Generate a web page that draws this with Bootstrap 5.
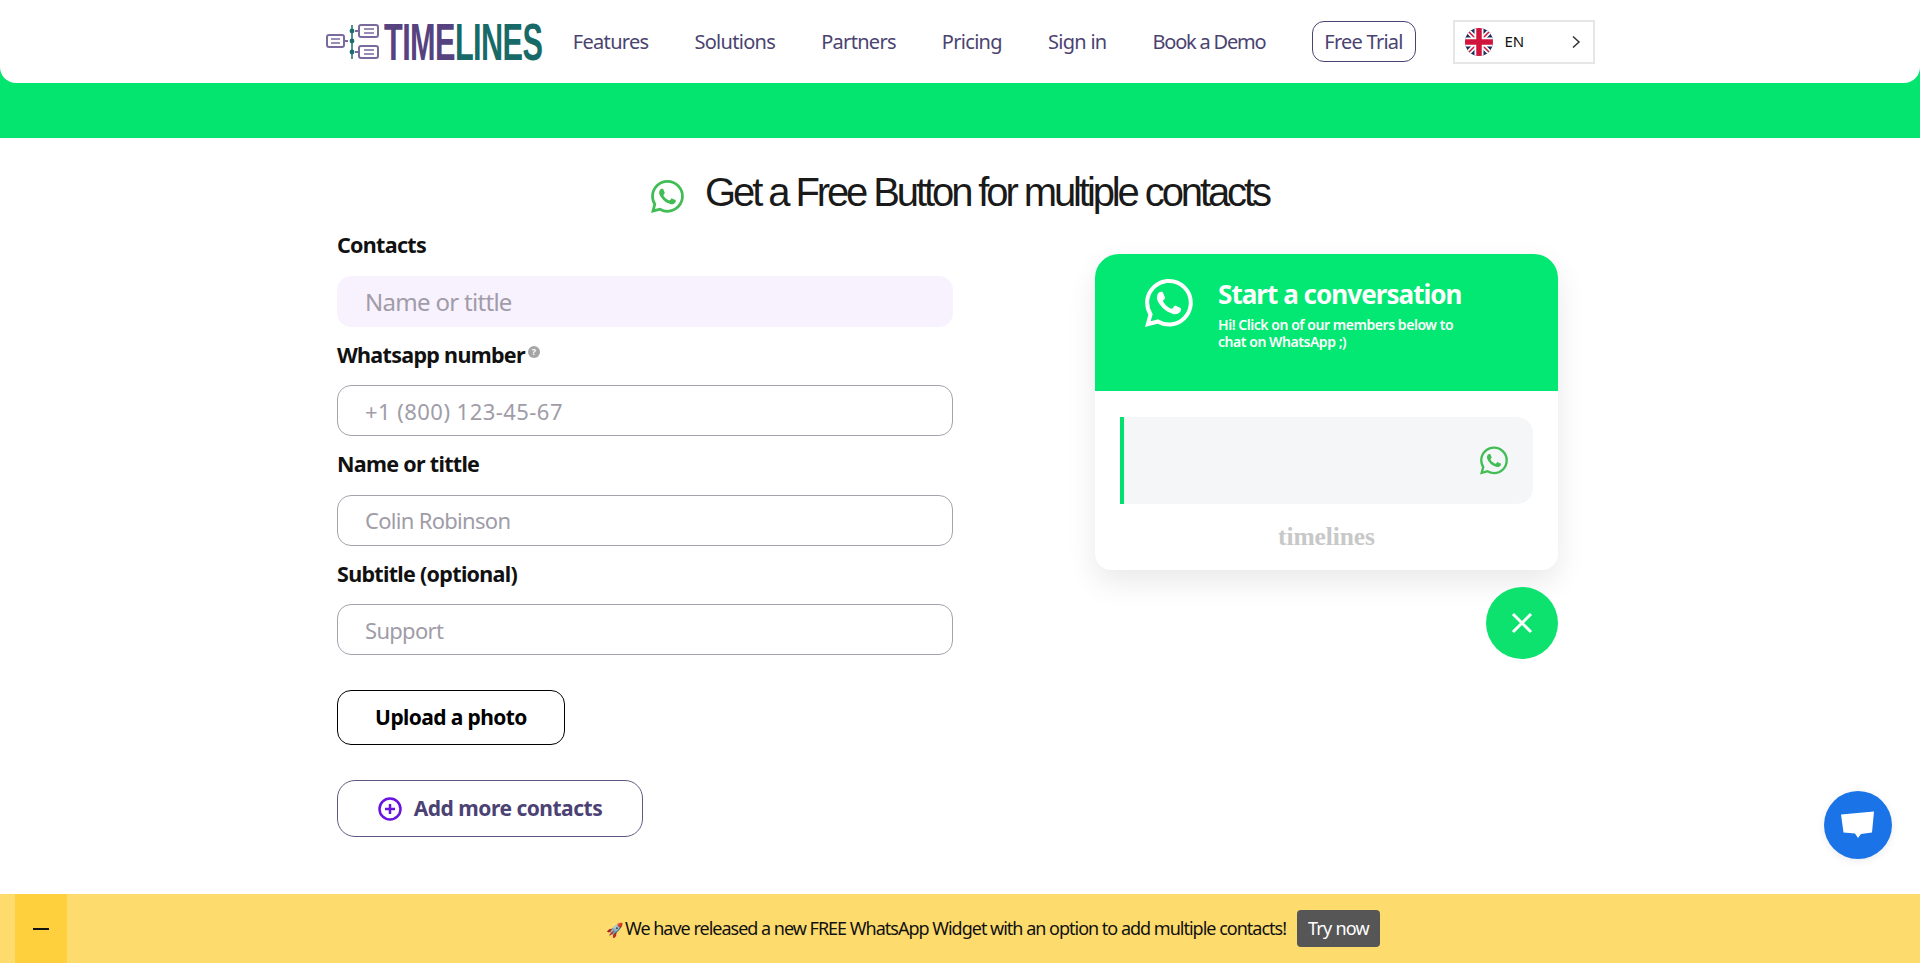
<!DOCTYPE html>
<html lang="en">
<head>
    <meta charset="UTF-8" />
    <meta name="viewport" content="width=device-width, initial-scale=1.0"/>
    <link href="https://cdn.jsdelivr.net/npm/bootstrap@5.3.0/dist/css/bootstrap.min.css" rel="stylesheet"/>
    <title>Timelines - Free WhatsApp Button</title>
    <style>
        body { font-family: "Noto Sans", "Open Sans", sans-serif; color: #111; overflow: hidden; height: 963px; }
        .top-band { background: linear-gradient(#02dc6b, #03e56f 40%); height: 138px; }
        .top-nav { background: #fff; height: 83px; border-radius: 0 0 16px 16px; }
        .nav-inner { width: 1269px; height: 83px; }
        .logo-box { width: 218px; margin-right: 30px; }
        .logo-word { font-family: "Liberation Sans", sans-serif; font-weight: 700; font-size: 52px; line-height: 1; letter-spacing: -1px; width: 159px; white-space: nowrap; display: inline-block; transform: scaleX(.59); transform-origin: left center; margin-left: 4px; }
        .logo-purple { color: #55427f; }
        .logo-teal { color: #186a68; }
        .menu-link { color: #4a4370; font-size: 20px; letter-spacing: -.7px; text-decoration: none; white-space: nowrap; }
        .menu-link.menu-tight { letter-spacing: -1.2px; }
        .menu-gap { gap: 46px; }
        .trial-btn { border: 1.5px solid #4a4370; border-radius: 12px; color: #4a4370; font-size: 20px; letter-spacing: -.75px; height: 41px; width: 104px; }
        .lang-box { border: 2px solid #e6e6e6; width: 142px; height: 44px; margin-left: -9px; padding: 0 12px 0 10px; font-size: 15px; color: #111; }
        .page-title { font-family: "Liberation Sans", sans-serif; font-size: 40px; letter-spacing: -3.1px; color: #1a1a1a; line-height: 1; margin: 0; }
        .title-row { height: 54px; margin-top: 27px; gap: 21px; }
        .main-wrap { width: 1221px; margin-left: 337px; gap: 142px; }
        .form-side { width: 616px; margin-top: 11px; }
        .field-label { display: block; font-size: 21.5px; font-weight: 700; letter-spacing: -.7px; line-height: 30px; margin-bottom: 15.5px; }
        .field-gap { height: 13px; }
        .hint-dot { display: inline-flex; width: 12px; height: 12px; border-radius: 50%; background: #a5a5a5; color: #fff; font-size: 9px; font-weight: 700; vertical-align: 8px; align-items: center; justify-content: center; margin-left: 3px; letter-spacing: 0; }
        .text-field { height: 51px; border: 1.5px solid #a5a3ad; border-radius: 14px; font-size: 22px; letter-spacing: -.7px; padding: 0 27px; }
        .text-field::placeholder { color: #a09ca8; opacity: 1; }
        .text-field.filled-field { background: #f8f1fe; border-color: #f8f1fe; font-size: 24px; }
        .text-field.phone-field { letter-spacing: .45px; }
        .upload-btn { width: 228px; height: 55px; border: 1.5px solid #000; border-radius: 14px; color: #000; font-size: 21px; font-weight: 700; letter-spacing: -.6px; margin-top: 35px; padding: 0; }
        .more-btn { width: 306px; height: 57px; border: 1.5px solid #615a80; border-radius: 18px; color: #4b4274; font-size: 21px; font-weight: 700; letter-spacing: -.5px; margin-top: 35px; gap: 12px; padding: 0; }
        .preview-side { width: 463px; margin-top: 35px; }
        .chat-card { background: #fff; border-radius: 24px 24px 16px 16px; box-shadow: 0 12px 30px rgba(0,0,0,.09); height: 316px; }
        .chat-head { background: #03e773; color: #fff; height: 137px; border-radius: 24px 24px 0 0; padding: 24px 40px 0 50px; gap: 25px; }
        .chat-title { font-size: 26px; font-weight: 700; letter-spacing: -.95px; line-height: 32px; margin: 0 0 6px; white-space: nowrap; }
        .chat-sub { font-size: 14px; font-weight: 600; letter-spacing: -.45px; line-height: 17px; margin: 0; width: 250px; }
        .member-row { background: #f5f6f8; height: 87px; margin: 26px 25px 0; border-left: 4px solid #03e06e; border-radius: 0 16px 16px 0; padding-right: 25px; }
        .brand-word { font-family: "Liberation Serif", serif; font-weight: 700; color: #c8c8c8; font-size: 25.5px; line-height: 1; letter-spacing: -.1px; margin-top: 20px; }
        .close-round { width: 72px; height: 72px; background: #0de26e; margin: 17px 0 0 auto; }
        .chat-bubble-btn { right: 28px; top: 791px; width: 68px; height: 68px; background: #1b73e8; box-shadow: 0 2px 8px rgba(0,0,0,.08); }
        .promo-bar { background: #fddb6d; height: 69px; left: 0; right: 0; top: 894px; padding-left: 66px; font-size: 18px; letter-spacing: -1px; color: #111; }
        .promo-min { left: 15px; top: 0; width: 52px; height: 69px; background: #ffd03d; }
        .min-line { width: 16px; height: 2px; background: #111; }
        .promo-btn { background: #565656; color: #fff; border-radius: 4px; font-size: 18px; letter-spacing: -.75px; height: 37px; width: 83px; margin-left: 11px; }
        .rocket { font-size: 14px; letter-spacing: 0; margin-right: 2px; }
    </style>
</head>
<body>
    <svg width="0" height="0" class="position-absolute">
        <symbol id="wa" viewBox="0 0 16 16"><path fill="currentColor" d="M13.601 2.326A7.854 7.854 0 0 0 7.994 0C3.627 0 .068 3.558.064 7.926c0 1.399.366 2.76 1.057 3.965L0 16l4.204-1.102a7.933 7.933 0 0 0 3.79.965h.004c4.368 0 7.926-3.558 7.93-7.93A7.898 7.898 0 0 0 13.6 2.326zM7.994 14.521a6.573 6.573 0 0 1-3.356-.92l-.24-.144-2.494.654.666-2.433-.156-.251a6.56 6.56 0 0 1-1.007-3.505c0-3.626 2.957-6.584 6.591-6.584a6.56 6.56 0 0 1 4.66 1.931 6.557 6.557 0 0 1 1.928 4.66c-.004 3.639-2.961 6.592-6.592 6.592zm3.615-4.934c-.197-.099-1.17-.578-1.353-.646-.182-.065-.315-.099-.445.099-.133.197-.513.646-.627.775-.114.133-.232.148-.43.05-.197-.1-.836-.308-1.592-.985-.59-.525-.985-1.175-1.103-1.372-.114-.198-.011-.304.088-.403.087-.088.197-.232.296-.346.1-.114.133-.198.198-.33.065-.134.034-.248-.015-.347-.05-.099-.445-1.076-.612-1.47-.16-.389-.323-.335-.445-.34-.114-.007-.247-.007-.38-.007a.729.729 0 0 0-.529.247c-.182.198-.691.677-.691 1.654 0 .977.71 1.916.81 2.049.098.133 1.394 2.132 3.383 2.992.47.205.84.326 1.129.418.475.152.904.129 1.246.08.38-.058 1.171-.48 1.338-.943.164-.464.164-.86.114-.943-.049-.084-.182-.133-.38-.232z"/></symbol>
    </svg>

    <!-- Header -->
    <div class="top-band">
        <nav class="top-nav">
            <div class="nav-inner mx-auto d-flex align-items-center justify-content-between">
                <a href="#" class="logo-box d-flex align-items-center text-decoration-none">
                    <svg width="54" height="36" viewBox="0 0 54 36" class="flex-shrink-0" fill="none">
                        <rect x="1" y="11" width="17" height="12" rx="2" stroke="#7b6a9e" stroke-width="2"/>
                        <path d="M5 15h9M5 19h9" stroke="#7b6a9e" stroke-width="1.5"/>
                        <path d="M18 17h4" stroke="#7b6a9e" stroke-width="2"/>
                        <path d="M26 1v34" stroke="#1d6d6b" stroke-width="1.5"/>
                        <circle cx="26" cy="7" r="2.4" fill="#1d6d6b"/><circle cx="26" cy="17" r="2.4" fill="#1d6d6b"/><circle cx="26" cy="28" r="2.4" fill="#1d6d6b"/>
                        <rect x="33" y="1" width="19" height="12" rx="2" stroke="#7b6a9e" stroke-width="2"/>
                        <path d="M38 5h10M38 9h10" stroke="#7b6a9e" stroke-width="1.5"/>
                        <rect x="33" y="22" width="19" height="12" rx="2" stroke="#7b6a9e" stroke-width="2"/>
                        <path d="M38 26h10M38 30h10" stroke="#7b6a9e" stroke-width="1.5"/>
                        <path d="M33 7l-4 0M33 28l-4 0" stroke="#7b6a9e" stroke-width="2"/>
                    </svg>
                    <span class="logo-word"><span class="logo-purple">TIME</span><span class="logo-teal">LINES</span></span>
                </a>
                <div class="d-flex align-items-center menu-gap flex-grow-1 justify-content-end">
                    <a href="#" class="menu-link">Features</a>
                    <a href="#" class="menu-link">Solutions</a>
                    <a href="#" class="menu-link">Partners</a>
                    <a href="#" class="menu-link">Pricing</a>
                    <a href="#" class="menu-link">Sign in</a>
                    <a href="#" class="menu-link menu-tight">Book a Demo</a>
                    <a href="#" class="btn trial-btn d-flex align-items-center justify-content-center p-0">Free Trial</a>
                    <div class="lang-box d-flex align-items-center">
                        <svg width="28" height="28" viewBox="0 0 28 28" class="flex-shrink-0">
                            <defs><clipPath id="flagClip"><circle cx="14" cy="14" r="14"/></clipPath></defs>
                            <g clip-path="url(#flagClip)">
                                <rect width="28" height="28" fill="#1f2a5a"/>
                                <path d="M0 0l28 28M28 0L0 28" stroke="#fff" stroke-width="5"/>
                                <path d="M0 0l28 28M28 0L0 28" stroke="#d0143c" stroke-width="1.5"/>
                                <path d="M14 0v28M0 14h28" stroke="#fff" stroke-width="9"/>
                                <path d="M14 0v28M0 14h28" stroke="#d0143c" stroke-width="5.5"/>
                            </g>
                        </svg>
                        <span class="ms-2 ps-1">EN</span>
                        <svg width="10" height="14" viewBox="0 0 10 14" class="ms-auto" fill="none"><path d="M2 1.5L8 7l-6 5.5" stroke="#333" stroke-width="1.5"/></svg>
                    </div>
                </div>
            </div>
        </nav>
    </div>

    <!-- Title -->
    <div class="title-row d-flex align-items-center justify-content-center">
        <svg width="33" height="35" class="mt-2"><use href="#wa" color="#42bd56"/></svg>
        <h1 class="page-title">Get a Free Button for multiple contacts</h1>
    </div>

    <div class="main-wrap d-flex align-items-start">
        <!-- Form -->
        <form class="form-side">
            <label class="field-label">Contacts</label>
            <input type="text" class="form-control text-field filled-field" placeholder="Name or tittle">
            <div class="field-gap"></div>
            <label class="field-label">Whatsapp number<span class="hint-dot">?</span></label>
            <input type="text" class="form-control text-field phone-field" placeholder="+1 (800) 123-45-67">
            <div class="field-gap"></div>
            <label class="field-label">Name or tittle</label>
            <input type="text" class="form-control text-field" placeholder="Colin Robinson">
            <div class="field-gap"></div>
            <label class="field-label">Subtitle (optional)</label>
            <input type="text" class="form-control text-field" placeholder="Support">
            <button type="button" class="btn upload-btn d-block">Upload a photo</button>
            <button type="button" class="btn more-btn d-flex align-items-center justify-content-center">
                <svg width="24" height="24" viewBox="0 0 24 24" fill="none"><circle cx="12" cy="12" r="10.5" stroke="#6a12e0" stroke-width="2.5"/><path d="M12 7v10M7 12h10" stroke="#6a12e0" stroke-width="2.5"/></svg>
                Add more contacts
            </button>
        </form>

        <!-- Widget preview -->
        <div class="preview-side">
            <div class="chat-card d-flex flex-column">
                <div class="chat-head d-flex">
                    <svg width="48" height="50" class="flex-shrink-0"><use href="#wa" color="#fff"/></svg>
                    <div>
                        <p class="chat-title">Start a conversation</p>
                        <p class="chat-sub">Hi! Click on of our members below to chat on WhatsApp ;)</p>
                    </div>
                </div>
                <div class="member-row d-flex align-items-center justify-content-end">
                    <svg width="28" height="29"><use href="#wa" color="#42bd56"/></svg>
                </div>
                <div class="brand-word text-center">timelines</div>
            </div>
            <div class="close-round rounded-circle d-flex align-items-center justify-content-center">
                <svg width="22" height="22" viewBox="0 0 22 22" fill="none"><path d="M2 2l18 18M20 2L2 20" stroke="#fff" stroke-width="3"/></svg>
            </div>
        </div>
    </div>

    <!-- Support chat button -->
    <div class="chat-bubble-btn position-fixed rounded-circle d-flex align-items-center justify-content-center">
        <svg width="34" height="30" viewBox="0 0 34 30"><path d="M0 4.5L33 1.5L31 22.5L20 24L17 28L14 23.5L2.5 22.5Z" fill="#fff"/></svg>
    </div>

    <!-- Promo bar -->
    <div class="promo-bar position-fixed d-flex align-items-center justify-content-center">
        <div class="promo-min position-absolute d-flex align-items-center justify-content-center"><span class="min-line"></span></div>
        <span><span class="rocket">🚀</span>We have released a new FREE WhatsApp Widget with an option to add multiple contacts!</span>
        <a href="#" class="btn promo-btn d-flex align-items-center justify-content-center p-0">Try now</a>
    </div>
</body>
</html>
